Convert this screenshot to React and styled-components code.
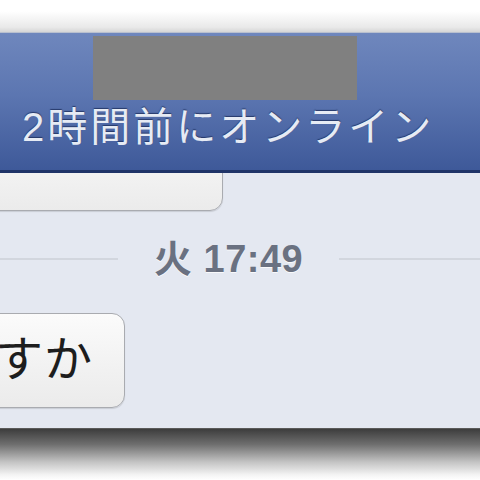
import React from "react";
import styled, { createGlobalStyle } from "styled-components";

const Global = createGlobalStyle`
  html, body { margin: 0; padding: 0; background: #ffffff; }
  body { font-family: "Liberation Sans", "Noto Sans CJK JP", sans-serif; }
  #root { width: 480px; height: 480px; overflow: hidden; }
`;

const Screen = styled.div`
  width: 480px;
  height: 480px;
  display: flex;
  flex-direction: column;
  overflow: hidden;
  background: #ffffff;
`;

const TopShade = styled.div`
  height: 32px;
  flex: none;
  background: linear-gradient(to bottom, #ffffff 0%, #ffffff 35%, #e9e9e9 85%, #d6d6d6 100%);
`;

const Header = styled.header`
  flex: none;
  height: 134px;
  border-top: 1px solid #b9c0cf;
  border-bottom: 3px solid #1f3468;
  background: linear-gradient(to bottom, #6f87bd 0%, #5c76b1 45%, #3e5999 100%);
  display: flex;
  flex-direction: column;
  align-items: flex-start;
  padding-top: 3px;
  box-sizing: content-box;
  position: relative;
  z-index: 2;
`;

const Redacted = styled.div`
  width: 264px;
  height: 64px;
  margin-left: 93px;
  background: #808080;
`;

const Status = styled.div`
  margin-top: 4px;
  padding-left: 22px;
  font-family: "Liberation Sans", "Noto Sans CJK JP", sans-serif;
  font-size: 40px;
  line-height: 46px;
  letter-spacing: 3px;
  color: #e6ebf4;
  text-shadow: 0 -1px 1px rgba(20, 35, 80, 0.7);
  white-space: nowrap;
`;

const Chat = styled.main`
  flex: none;
  height: 255px;
  background: #e4e8f1;
  overflow: hidden;
  display: flex;
  flex-direction: column;
  align-items: flex-start;
  border-bottom: 1px solid #5a5a5a;
`;

const Bubble = styled.div`
  box-sizing: border-box;
  margin-left: -20px;
  width: ${(p) => p.$width}px;
  height: ${(p) => p.$height}px;
  margin-top: ${(p) => p.$top}px;
  border: 1px solid #a9abb0;
  border-radius: 13px;
  background: linear-gradient(to bottom, #fbfbfb 0%, #f1f1f1 60%, #ebebeb 100%);
  box-shadow: 0 1px 1px rgba(0, 0, 0, 0.12);
  display: flex;
  align-items: center;
  justify-content: flex-end;
  padding-right: 31px;
  padding-bottom: 12px;
  font-family: "Noto Sans CJK JP", sans-serif;
  font-size: 48px;
  letter-spacing: 1px;
  color: #1d1d1d;
  white-space: nowrap;
`;

const TimeRow = styled.div`
  align-self: stretch;
  display: flex;
  align-items: center;
  margin-top: 28px;
  height: 40px;
`;

const Rule = styled.div`
  height: 2px;
  background: #d2d6de;
  width: ${(p) => (p.$grow ? "auto" : `${p.$w}px`)};
  flex: ${(p) => (p.$grow ? "1" : "none")};
`;

const Stamp = styled.div`
  margin: 0 36px 0 36px;
  font-family: "Liberation Sans", "Noto Sans CJK JP", sans-serif;
  font-weight: 700;
  font-size: 38px;
  line-height: 40px;
  letter-spacing: 0.5px;
  color: #6a7181;
  text-shadow: 0 1px 0 rgba(255, 255, 255, 0.8);
  white-space: nowrap;
`;

const BottomShade = styled.div`
  flex: 1;
  background: linear-gradient(to bottom, #3d3d3d 0%, #6e6e6e 30%, #c4c4c4 65%, #f4f4f4 90%, #ffffff 100%);
`;

export default function App() {
  return (
    <>
      <Global />
      <Screen>
        <TopShade />
        <Header>
          <Redacted />
          <Status>2時間前にオンライン</Status>
        </Header>
        <Chat>
          <Bubble $width={243} $height={80} $top={-42} />
          <TimeRow>
            <Rule $w={118} />
            <Stamp>火 17:49</Stamp>
            <Rule $grow />
          </TimeRow>
          <Bubble $width={145} $height={95} $top={34}>すか</Bubble>
        </Chat>
        <BottomShade />
      </Screen>
    </>
  );
}
